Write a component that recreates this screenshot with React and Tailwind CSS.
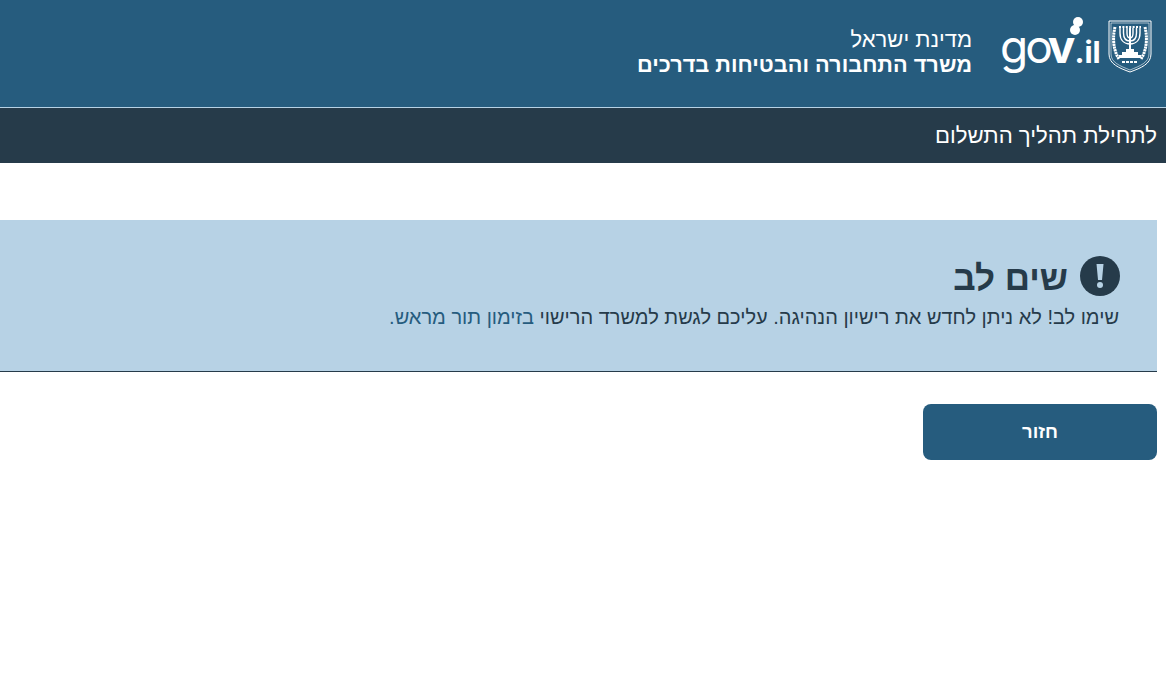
import React from 'react'

function Emblem() {
    return (
        <svg width="44" height="53" viewBox="0 0 44 53" fill="none" stroke="white" className="shrink-0">
            {/* shield */}
            <path d="M1 1H43V34C43 44 33 48 22 52C11 48 1 44 1 34Z" strokeWidth="1" />
            <path d="M3 3H41V34C41 42.500 32 46 22 50C12 46 3 42.500 3 34Z" strokeWidth="0.6" />
            {/* olive branches */}
            <path d="M7 7C4.500 17 5 30 11 39M37 7C39.500 17 39 30 33 39" strokeWidth="3" strokeDasharray="2.200 0.600" />
            {/* menorah */}
            <path d="M22 8V30" strokeWidth="2" />
            <path d="M12 8V13C12 20 16 24 22 24C28 24 32 20 32 13V8" strokeWidth="1.400" />
            <path d="M15.500 8V13C15.500 18 18 21 22 21C26 21 28.500 18 28.500 13V8" strokeWidth="1.400" />
            <path d="M19 8V13C19 16 20 18 22 18C24 18 25 16 25 13V8" strokeWidth="1.400" />
            <path d="M11 7H33" strokeWidth="1.800" strokeDasharray="2 1.400" />
            {/* base */}
            <path d="M18 29H26V32H30V35H33V38H11V35H14V32H18Z" fill="white" stroke="none" />
            <path d="M14 42H30" strokeWidth="1.800" strokeDasharray="3 1" />
        </svg>
    )
}

function GovLogo() {
    return (
        <div className="relative h-[60px] w-[100px] shrink-0 font-['Inter',sans-serif] text-white" dir="ltr">
            <div className="flex items-baseline h-[60px] leading-[60px]">
                <span className="text-[46px] tracking-[-3px] font-normal">go</span>
                <span className="text-[46px] font-bold -ml-[2px]">v</span>
                <span className="text-[30px] font-bold -ml-[1px]">.il</span>
            </div>
            <div className="absolute left-[70px] top-[9px] h-[10px] w-[10px] rounded-full bg-white" />
            <div className="absolute left-[73px] top-[1px] h-[10px] w-[10px] rounded-full bg-white" />
        </div>
    )
}

export default function App() {
    return (
        <div dir="rtl" className="min-h-screen bg-white font-['Liberation_Sans',sans-serif]">
            {/* Header */}
            <header className="h-[108px] bg-[#265c7e] border-b border-[#b7d2e5] flex items-start pt-[16px] pr-[14px] gap-[30px]">
                <div className="flex items-start gap-[8px]">
                    <div className="pt-[4px]"><Emblem /></div>
                    <GovLogo />
                </div>
                <div className="text-white pt-[11px] -mr-[2px]">
                    <div className="text-[22px] leading-[26px]">מדינת ישראל</div>
                    <div className="text-[21.750px] leading-[23px] font-bold">משרד התחבורה והבטיחות בדרכים</div>
                </div>
            </header>

            {/* Sub title */}
            <div className="h-[55px] bg-[#263b4a] flex items-center pr-[9px]">
                <div className="text-white text-[22.200px] leading-[28px] pt-[1px]">לתחילת תהליך התשלום</div>
            </div>

            <main className="pr-[9px] pt-[57px]">
                {/* Notice */}
                <div className="h-[152px] bg-[#b7d2e5] border-b border-[#263b4a] pt-[35px] pr-[37px]">
                    <div className="flex items-center gap-[12px] h-[42px]">
                        <div className="w-[40px] h-[40px] rounded-full bg-[#263b4a] flex items-center justify-center">
                            <svg width="8" height="26" viewBox="0 0 8 26" fill="#b7d2e5">
                                <path d="M0.500 1H7.500L6 17H2Z" />
                                <circle cx="4" cy="22" r="3" />
                            </svg>
                        </div>
                        <h1 className="text-[35px] leading-[42px] font-bold text-[#263b4a] pt-[3px]">שים לב</h1>
                    </div>
                    <p className="text-[20px] leading-[24px] text-[#263b4a] mt-[8px] pr-[1px]">
                        שימו לב! לא ניתן לחדש את רישיון הנהיגה. עליכם לגשת למשרד הרישוי <span className="text-[#265c7e]">בזימון תור מראש.</span>
                    </p>
                </div>

                <button className="mt-[32px] w-[234px] h-[56px] rounded-[8px] bg-[#265c7e] text-white text-[18.500px] font-bold">
                    חזור
                </button>
            </main>
        </div>
    )
}
